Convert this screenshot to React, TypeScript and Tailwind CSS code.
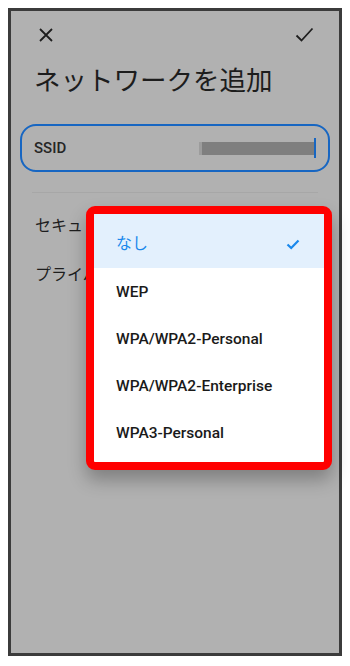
const options = ["なし", "WEP", "WPA/WPA2-Personal", "WPA/WPA2-Enterprise", "WPA3-Personal"];

export default function App() {
  return (
    <div className="w-[350px] h-[666px] bg-white pt-[8px] pl-[8px] font-['Roboto','Noto_Sans_CJK_JP',sans-serif]">
      <div className="relative w-[334px] h-[648px] border-[3px] border-[#3b3b3b] bg-[#b1b1b1]">
        {/* top bar */}
        <div className="flex items-center justify-between h-[48px] pl-[28px] pr-[25px]">
          <svg width="14" height="14" viewBox="0 0 14 14" className="text-[#1e1e1e]">
            <path d="M1 1 L13 13 M13 1 L1 13" stroke="currentColor" strokeWidth="1.8" fill="none" />
          </svg>
          <svg width="19" height="16" viewBox="0 0 19 16" className="text-[#1e1e1e]">
            <path d="M1.5 8.5 L6.5 13.5 L17.5 1.5" stroke="currentColor" strokeWidth="1.8" fill="none" />
          </svg>
        </div>

        <h1 className="mt-[4px] px-[23px] text-[26.5px] leading-[36px] text-[#1d1d1d] font-normal">
          ネットワークを追加
        </h1>

        {/* SSID field */}
        <div className="mt-[25px] mx-[9px] h-[48px] rounded-[16px] border-2 border-[#1766c2] flex items-center justify-between pl-[12px] pr-[12px]">
          <span className="text-[15px] font-medium text-[#262626]">SSID</span>
          <div className="flex items-center">
            <div className="w-[3px] h-[13px] bg-[#9c9c9c]" />
            <div className="w-[112px] h-[13px] bg-[#7f7f7f]" />
            <div className="w-[2px] h-[20px] bg-[#1766c2]" />
          </div>
        </div>

        <div className="mt-[20px] mx-[21px] h-px bg-[#a7a7a7]" />

        <div className="mt-[21px] px-[24px] text-[16px] leading-[24px] text-[#1e1e1e]">セキュリティ</div>
        <div className="mt-[25px] px-[24px] text-[16px] leading-[24px] text-[#1e1e1e]">プライバシー</div>

        {/* dropdown menu */}
        <div className="absolute left-[75px] top-[195px] w-[246px] h-[264px] rounded-[9px] border-[8px] border-[#ff0000] bg-white overflow-hidden shadow-[0_10px_18px_rgba(0,0,0,0.28)]">
          {options.map((opt, i) =>
            i === 0 ? (
              <div key={opt} className="h-[54px] bg-[#e3f0fd] flex items-center justify-between pl-[22px] pr-[24px] pt-[6px]">
                <span className="text-[16px] text-[#1a88ec]">{opt}</span>
                <svg width="14" height="11" viewBox="0 0 14 11" className="text-[#1a88ec]">
                  <path d="M1.5 5.5 L5.2 9 L12.5 1.5" stroke="currentColor" strokeWidth="2.2" fill="none" />
                </svg>
              </div>
            ) : (
              <div key={opt} className="h-[47px] flex items-center pl-[22px] pt-[3px]">
                <span className="text-[15.5px] font-medium text-[#1a1a1a]">{opt}</span>
              </div>
            )
          )}
        </div>
      </div>
    </div>
  );
}
